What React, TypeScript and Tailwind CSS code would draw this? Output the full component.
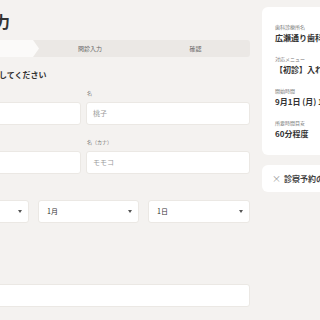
import type { ReactNode } from "react";

function Label({ children }: { children: ReactNode }) {
  return <div className="text-[5px] leading-[8px] text-[#777] pl-[1px] mb-[5px]">{children}</div>;
}

function Input({ placeholder }: { placeholder?: string }) {
  return (
    <div className="h-[23px] rounded-[3px] bg-white border border-[#ebe8e4] flex items-center px-[6px] text-[7px] text-[#9a9a9a]">
      {placeholder}
    </div>
  );
}

function Select({ value }: { value: string }) {
  return (
    <div className="h-[23px] rounded-[3px] bg-white border border-[#ebe8e4] flex items-center justify-between pl-[8px] pr-[6px] text-[7px] text-[#333]">
      <span>{value}</span>
      <span className="w-0 h-0 border-l-[2px] border-r-[2px] border-t-[3px] border-l-transparent border-r-transparent border-t-[#555]" />
    </div>
  );
}

export default function App() {
  return (
    <div className="w-[320px] h-[320px] overflow-hidden bg-[#f4f2f0] text-[#333] font-['Noto_Sans_CJK_JP','Noto_Sans',sans-serif]">
      <div className="flex gap-[12px] ml-[-83px]">
        <div className="w-[333px] shrink-0">
          <h1 className="text-[16px] leading-[22px] font-bold pt-[10px] ml-[-3px]">患者情報入力</h1>

          <div className="mt-[8px] flex h-[17px] rounded-[3px] bg-[#ebe8e5] text-[6px] text-[#666]">
            <div className="w-[122px] bg-[#fbfaf9] rounded-l-[3px] flex items-center justify-center pr-[6px] [clip-path:polygon(0_0,calc(100%-6px)_0,100%_50%,calc(100%-6px)_100%,0_100%)]">
              情報入力
            </div>
            <div className="w-[102px] flex items-center justify-center">問診入力</div>
            <div className="flex-1 flex items-center justify-center">確認</div>
          </div>

          <p className="mt-[12px] ml-[18px] text-[8px] leading-[12px] font-bold">お客様情報を入力してください</p>

          <div className="mt-[8px] grid grid-cols-2 gap-x-[5px]">
            <div>
              <Label>姓</Label>
              <Input placeholder="山田" />
            </div>
            <div>
              <Label>名</Label>
              <Input placeholder="桃子" />
            </div>
          </div>

          <div className="mt-[13px] grid grid-cols-2 gap-x-[5px]">
            <div>
              <Label>姓（カナ）</Label>
              <Input placeholder="ヤマダ" />
            </div>
            <div>
              <Label>名（カナ）</Label>
              <Input placeholder="モモコ" />
            </div>
          </div>

          <div className="mt-[13px]">
            <Label>生年月日</Label>
            <div className="flex gap-[9px]">
              <div className="flex-1">
                <Select value="1990年" />
              </div>
              <div className="w-[101px]">
                <Select value="1月" />
              </div>
              <div className="w-[102px]">
                <Select value="1日" />
              </div>
            </div>
          </div>

          <div className="mt-[48px]">
            <Label>電話番号</Label>
            <Input />
          </div>
        </div>

        <div className="w-[200px] shrink-0 pt-[7px]">
          <div className="bg-white rounded-[6px] px-[13px] pt-[16px] pb-[15px] flex flex-col gap-[11px]">
            <div>
              <div className="text-[5px] leading-[8px] text-[#777]">歯科診療所名</div>
              <div className="mt-[1px] text-[8px] leading-[12px] font-bold">広瀬通り歯科クリニック</div>
            </div>
            <div>
              <div className="text-[5px] leading-[8px] text-[#777]">対応メニュー</div>
              <div className="mt-[1px] text-[8px] leading-[12px] font-bold">【初診】入れ歯・義歯の相談</div>
            </div>
            <div>
              <div className="text-[5px] leading-[8px] text-[#777]">開始時間</div>
              <div className="mt-[1px] text-[8px] leading-[12px] font-bold">9月1日 (月) 10:00〜</div>
            </div>
            <div>
              <div className="text-[5px] leading-[8px] text-[#777]">所要時間目安</div>
              <div className="mt-[1px] text-[8px] leading-[12px] font-bold">60分程度</div>
            </div>
          </div>

          <div className="mt-[10px] h-[27px] bg-white rounded-[6px] flex items-center gap-[3px] px-[10px]">
            <span className="text-[9px] text-[#999] leading-none">×</span>
            <span className="text-[8px] font-bold text-[#444]">診察予約のキャンセル</span>
          </div>
        </div>
      </div>
    </div>
  );
}
